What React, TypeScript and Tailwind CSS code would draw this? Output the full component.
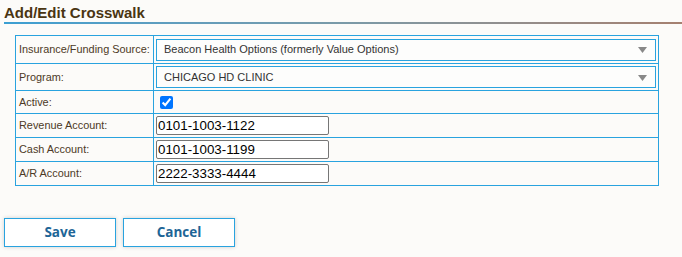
import { FC } from 'react';

const rows: { label: string; kind: 'select' | 'check' | 'text'; value?: string; h: string }[] = [
  { label: 'Insurance/Funding Source:', kind: 'select', value: 'Beacon Health Options (formerly Value Options)', h: 'h-[28px]' },
  { label: 'Program:', kind: 'select', value: 'CHICAGO HD CLINIC', h: 'h-[27px]' },
  { label: 'Active:', kind: 'check', h: 'h-[23px]' },
  { label: 'Revenue Account:', kind: 'text', value: '0101-1003-1122', h: 'h-[24px]' },
  { label: 'Cash Account:', kind: 'text', value: '0101-1003-1199', h: 'h-[24px]' },
  { label: 'A/R Account:', kind: 'text', value: '2222-3333-4444', h: 'h-[24px]' },
]

const FakeSelect: FC<{ value: string }> = ({ value }) => (
  <div className="flex items-center justify-between h-[22px] border border-[#29a3df] bg-[#fdfdfc] pl-[7px] pr-[8px] text-[11px] text-[#333]">
    <span>{value}</span>
    <svg width="9" height="6" viewBox="0 0 9 6" className="mt-[1px]">
      <path d="M0 0H9L4.5 6Z" fill="#888" />
    </svg>
  </div>
)

const App: FC = () => {
  return (
    <div className="w-[682px] h-[257px] bg-[#fcfbf9] pt-[5px] font-['Liberation_Sans',Arial,sans-serif]">
      <div className="pl-[4px]">
        <h2 className="text-[15px] font-bold leading-[16px] text-[#4a3512] pb-[1px]">Add/Edit Crosswalk</h2>
        <div className="h-[2px] bg-gradient-to-r from-[#3b9fd2] via-[#7a9aa8] to-[#a58070]" />
      </div>

      <table className="ml-[15px] mt-[11px] w-[644px] table-fixed border-collapse border border-[#29a3df]">
        <colgroup>
          <col className="w-[138px]" />
          <col />
        </colgroup>
        <tbody>
          {rows.map((r) => (
            <tr key={r.label} className={r.h}>
              <td className="border border-[#29a3df] pl-[3px] pr-[2px] whitespace-nowrap text-[10.9px] text-[#4d3a26] align-middle">
                {r.label}
              </td>
              <td className="border border-[#29a3df] px-[2px] py-0 align-middle">
                {r.kind === 'select' && <FakeSelect value={r.value!} />}
                {r.kind === 'check' && (
                  <input
                    type="checkbox"
                    checked
                    readOnly
                    className="ml-[4px] block w-[13px] h-[13px] accent-[#0075ff]"
                  />
                )}
                {r.kind === 'text' && (
                  <input
                    type="text"
                    value={r.value}
                    readOnly
                    className="block w-[173px] h-[19px] border border-[#767676] rounded-[2px] bg-white px-[1px] text-[13.33px] text-black outline-none font-['Liberation_Sans',Arial,sans-serif]"
                  />
                )}
              </td>
            </tr>
          ))}
        </tbody>
      </table>

      <div className="flex gap-[7px] pl-[4px] mt-[32px]">
        <button className="w-[112px] h-[29px] border border-[#29a3df] bg-white shadow-[0_0_4px_rgba(0,0,0,0.18)] text-[13.5px] font-bold text-[#1d6596] font-['Open_Sans',sans-serif]">
          Save
        </button>
        <button className="w-[112px] h-[29px] border border-[#29a3df] bg-white shadow-[0_0_4px_rgba(0,0,0,0.18)] text-[13.5px] font-bold text-[#1d6596] font-['Open_Sans',sans-serif]">
          Cancel
        </button>
      </div>
    </div>
  );
};

export default App;
